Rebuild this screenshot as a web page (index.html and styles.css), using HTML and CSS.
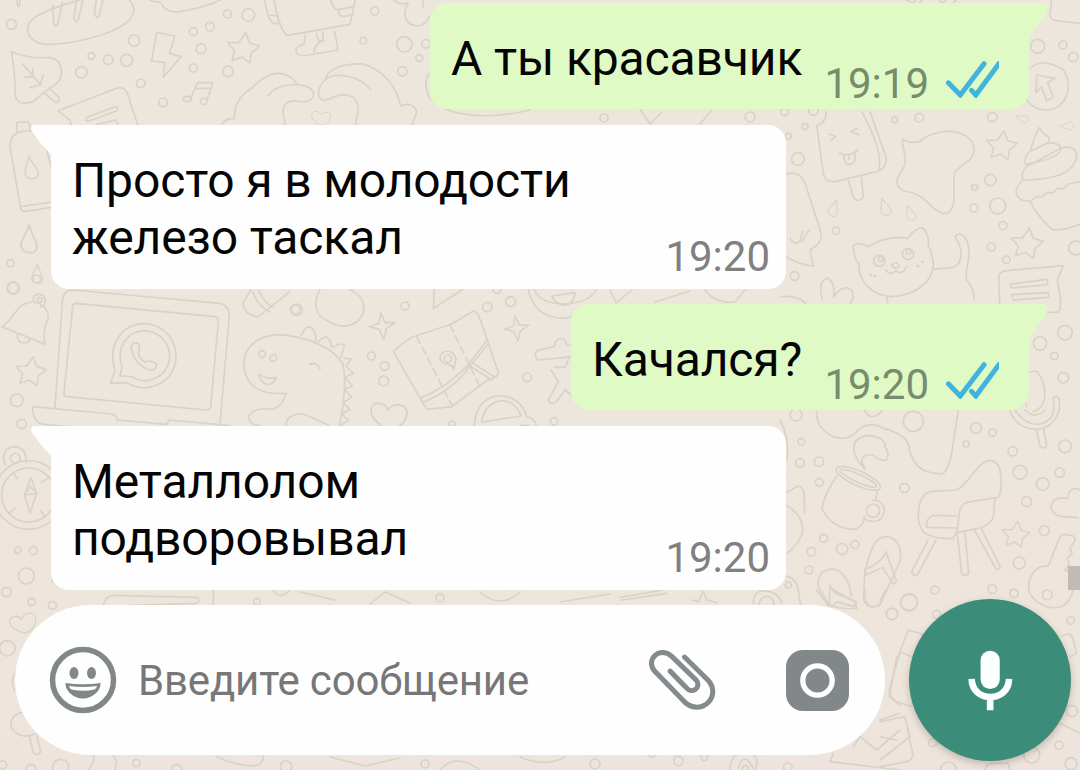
FILE: index.html
```html
<!DOCTYPE html>
<html lang="ru">
<head>
  <meta charset="UTF-8" />
  <meta name="viewport" content="width=device-width, initial-scale=1.0"/>
  <title>Чат</title>
  <link rel="stylesheet" href="styles.css">
</head>
<body>

  <!-- обои чата -->
  <svg class="wallpaper" viewBox="0 0 1080 770" aria-hidden="true">
    <defs>
      <path id="star" d="M4 -46 L16 -15 L46 -6 L21 15 L17 45 L-7 27 L-37 38 L-29 9 L-50 -16 L-16 -17 Z"/>
      <path id="spark" d="M-5 -40 L8 -10 L38 -10 L12 8 L4 40 L-10 10 L-38 2 L-10 -8 Z"/>
      <path id="heart" d="M0 38 C-20 30 -52 5 -48 -18 C-44 -42 -8 -38 -2 -16 C10 -38 52 -34 50 -8 C48 14 30 36 0 38 Z"/>
      <path id="drop" d="M0 -38 C4 -15 24 8 22 25 C18 45 -18 42 -22 20 C-24 4 -6 -15 0 -38 Z"/>
    </defs>

    <g transform="scale(.33333)">
      <path d="M85 75 C95 40 220 0 300 -12 C390 -30 415 20 395 50 C370 95 240 130 150 133 C100 135 75 105 85 75 Z"/>
      <path d="M158 15 L161 70 Q168 88 174 70 L187 8 M230 0 L221 55 Q228 74 236 55 L250 -5 M290 -5 L283 42 Q292 62 299 42 L310 -5"/>
      <path d="M34 155 Q90 178 150 172 C190 180 195 230 165 255 Q125 280 100 305 Q50 320 46 285 C45 240 45 210 34 155 Z M68 192 L122 255 M72 232 L97 230 L99 205 M90 262 L120 255 L130 225 M133 280 L165 306 Q182 308 176 292 L148 264"/>
      <path d="M470 97 L525 108 L508 160 L543 170 L490 232 L494 187 L455 183 Z"/>
      <path d="M215 380 L210 360 L174 332 L350 265 Q372 258 382 280 L415 380 M262 352 L345 320 Q360 322 350 333 L265 364 Q250 362 262 352 M290 374 L345 360 L355 372"/>
      <path d="M572 296 L592 248 L639 248 L620 302 M585 265 L632 265"/>
      <ellipse cx="562" cy="297" rx="12" ry="8"/><circle cx="611" cy="304" r="10"/>
      <path d="M450 0 Q465 8 482 6 Q495 40 540 35 Q620 22 670 -4"/>
      <path d="M793 0 L805 50 Q815 75 834 70 M822 0 C830 45 840 90 862 106 L1050 73 L1066 0 M808 45 L828 48 M993 0 Q1000 35 1020 28 L1062 20 M1018 30 Q1010 48 1030 50 L1058 44"/>
      <path d="M915 106 L913 132 Q880 140 890 160 Q900 170 925 165 L1014 150 L1004 95 M950 100 L955 122 L970 120 L968 96 M972 122 Q945 128 942 155"/>
      <path d="M660 380 Q680 350 704 356 C700 320 720 285 755 265 C790 230 820 210 860 225 Q880 235 890 252 M803 288 Q830 255 870 255 Q930 250 941 280 Q940 312 890 303 Q850 300 849 335 L856 380"/>
      <path d="M975 240 C985 200 1040 190 1090 192 C1150 210 1190 260 1202 318 Q1240 305 1250 335 L1235 380 M1112 270 C1080 225 1000 215 975 240 C945 270 950 310 985 298 C1030 275 1075 280 1075 330 L1065 380"/>
      <path d="M1180 0 Q1200 18 1225 8 C1205 45 1215 75 1255 78 Q1275 75 1288 50 M1270 0 V20 M1290 220 Q1265 240 1290 300"/>
      <path d="M52 0 V14 Q56 24 60 14 V0"/>
      <use href="#star" x="733" y="144"/><use href="#heart" transform="translate(963 354) scale(.58)"/>
      <circle cx="34" cy="73" r="15"/><circle cx="402" cy="122" r="17"/><circle cx="274" cy="168" r="10"/><circle cx="325" cy="179" r="14"/><circle cx="380" cy="181" r="18"/><circle cx="244" cy="217" r="17"/><circle cx="422" cy="250" r="13"/><circle cx="489" cy="307" r="13"/><circle cx="580" cy="204" r="12"/><circle cx="603" cy="146" r="15"/><circle cx="580" cy="95" r="12"/><circle cx="630" cy="80" r="13"/><circle cx="682" cy="42" r="12"/><circle cx="745" cy="45" r="19"/><circle cx="684" cy="214" r="16"/><circle cx="1124" cy="33" r="12"/><circle cx="1090" cy="122" r="10"/><circle cx="1213" cy="133" r="23"/><circle cx="1278" cy="131" r="13"/><circle cx="1258" cy="174" r="10"/><circle cx="1207" cy="214" r="14"/>
    </g>

    <!-- мороженое, кот, пирожное -->
    <g transform="translate(780 0) scale(.33333)">
      <path d="M110 375 Q140 370 138 335 M110 375 L130 520 Q135 548 165 545 L290 515 Q322 505 318 470 L270 335 M245 335 C270 380 310 460 296 512 M205 542 L220 590 Q235 612 250 592 L244 528 M148 402 L168 410 L154 420 M232 385 L212 396 L236 404 M178 460 Q205 472 234 450 M190 465 Q195 500 215 492 Q232 482 222 458 M207 464 V478"/>
      <path d="M368 418 Q390 432 420 425 C460 385 560 380 580 435 C595 490 520 495 522 530 L522 600 C515 650 490 650 455 620 C420 580 390 575 370 573 C335 550 355 530 372 500 C385 480 362 430 368 418 Z"/>
      <path d="M748 206 Q790 170 850 210 C885 260 855 330 800 330 Q760 330 740 300 M770 225 L825 235 L803 248 L820 292 L800 302 L785 260 L768 278 Z"/>
      <path d="M815 0 L810 45 Q812 62 835 63 L900 70 M380 0 L400 8 L410 -2 M420 6 L435 -5 M478 0 L485 8 L500 0 M520 6 L535 -4"/>
      <path d="M752 452 Q765 400 778 383 Q785 400 805 410 Q812 425 800 430 M735 487 Q735 455 760 450 L800 430 Q845 425 842 450 Q830 480 735 492 M728 540 Q720 500 760 490 L845 443 Q890 435 890 470 Q880 540 728 540 M728 540 Q690 580 725 600 L750 604 L770 590 L788 590 L800 578 L818 578 L832 566 L850 566 L866 552 L900 545 M750 604 Q780 660 820 690 Q860 690 900 672"/>
      <path d="M265 740 C235 725 218 730 220 745 Q225 785 236 790 C235 850 280 885 330 890 C400 888 460 850 460 790 Q455 750 445 740 C448 700 430 680 418 684 Q390 700 385 715 Q320 705 265 740 Z M460 808 L520 802 C555 785 545 740 525 710 Q540 690 560 720 C580 770 550 810 560 840 Q585 870 582 900 M318 810 Q330 830 348 812 Q365 828 380 800 M335 795 Q350 780 358 798 Q346 812 335 795"/>
      <circle cx="298" cy="782" r="17"/><circle cx="384" cy="762" r="17"/><circle cx="302" cy="777" r="7"/><circle cx="386" cy="755" r="7"/><circle cx="272" cy="825" r="2"/><circle cx="285" cy="828" r="2"/><circle cx="414" cy="797" r="2"/><circle cx="427" cy="785" r="2"/>
      <path d="M18 522 Q60 510 75 550 L124 700 Q125 735 92 748 Q90 770 102 798 Q60 795 18 770 M30 715 Q45 740 60 722 L68 695 M65 725 L88 690"/>
      <path d="M128 900 Q110 840 145 834 Q165 850 162 890 Q190 850 215 870 Q225 890 210 912 M0 890 Q60 885 80 915 Q150 920 165 930 M320 890 L326 925"/>
      <path d="M660 940 L656 830 Q658 815 680 812 L850 797 L832 840 L842 900 L840 925 Q840 938 825 937 L790 936 M692 852 L800 838 Q808 850 798 855 L695 864 Z M695 884 L805 878 L806 892 L700 900 Z"/>
      <use href="#drop" transform="translate(162 624) rotate(20) scale(.65)"/><use href="#drop" transform="translate(314 620) rotate(-20) scale(.7)"/><use href="#drop" transform="translate(390 638) rotate(-20) scale(.62)"/><use href="#drop" transform="translate(726 355) rotate(-70) scale(.5)"/><use href="#drop" transform="translate(860 378) rotate(-90) scale(.55)"/>
      <use href="#star" transform="translate(668 436) scale(.95)"/><use href="#star" transform="translate(744 730)"/>
      <circle cx="773" cy="139" r="21"/><circle cx="849" cy="135" r="12"/><circle cx="880" cy="171" r="14"/><circle cx="344" cy="359" r="9"/><circle cx="418" cy="353" r="13"/><circle cx="637" cy="351" r="14"/><circle cx="75" cy="380" r="9"/><circle cx="25" cy="409" r="9"/><circle cx="54" cy="477" r="19"/><circle cx="100" cy="332" r="14"/><circle cx="14" cy="336" r="11"/><circle cx="631" cy="540" r="17"/><circle cx="584" cy="562" r="9"/><circle cx="582" cy="624" r="12"/><circle cx="653" cy="618" r="24"/><circle cx="669" cy="677" r="12"/><circle cx="634" cy="741" r="12"/><circle cx="679" cy="779" r="11"/><circle cx="887" cy="744" r="21"/><circle cx="168" cy="692" r="11"/><circle cx="44" cy="828" r="13"/>
    </g>

    <!-- ноутбук и колокольчик -->
    <g transform="translate(0 280) scale(.33333)">
      <path d="M165 383 L187 65 Q188 30 220 30 L660 70 Q692 78 687 120 L660 432 M218 80 Q218 70 228 70 L645 110 Q656 112 655 125 L632 380 Q630 391 618 390 L200 350 Q190 348 192 338 Z"/>
      <path d="M97 380 L335 402 Q350 405 352 420 L500 433 L508 420 L690 437 M97 380 Q98 425 130 433 L220 441"/>
      <path d="M332 310 L345 270 C320 190 370 131 434 131 C500 135 535 190 527 245 C515 310 440 345 380 308 Z M360 288 L366 262 C345 200 385 152 434 152 C485 155 515 200 508 240 C500 290 440 320 395 290 Z"/>
      <path d="M393 200 Q398 185 415 190 Q422 205 414 218 Q418 235 435 246 Q455 238 470 252 Q470 272 450 270 Q400 255 393 200 Z"/>
      <path d="M6 140 C50 110 45 70 100 66 Q145 75 145 115 Q125 155 136 193 Z M102 66 Q95 42 118 43 Q138 45 136 65 Q133 80 122 80 M52 162 Q52 190 70 188 Q88 190 90 175"/>
      <circle cx="119" cy="60" r="7"/><use href="#star" transform="translate(95 274) scale(.95)"/>
      <circle cx="39" cy="24" r="17"/><circle cx="110" cy="-3" r="12"/><circle cx="50" cy="361" r="19"/><circle cx="65" cy="432" r="14"/>
      <circle cx="886" cy="88" r="14"/>
    </g>

    <!-- динозавр и карта -->
    <g transform="translate(240 280) scale(.33333)">
      <path d="M298 438 C310 380 320 300 308 250 C270 190 170 165 110 164 C40 170 10 210 11 260 C20 320 60 345 138 340 Q130 375 100 388 Q40 380 26 410 Q30 438 60 436 M138 436 Q140 400 190 402 L265 435 M183 165 L200 142 Q225 135 228 182 M235 186 Q265 150 275 200 M278 202 Q305 185 313 197 L303 232 M312 235 L334 237 L318 258 L340 280 L316 292 L337 318 L314 328 L334 352 L310 368 L329 388 L305 402 L326 422 L300 436 M208 252 Q232 245 240 268 M215 254 Q225 248 232 255 M55 283 Q85 300 110 292 Q95 322 72 310 Q60 300 55 283 Z"/>
      <circle cx="66" cy="222" r="10"/><circle cx="100" cy="234" r="10"/>
      <path d="M8 70 L38 20 M8 70 Q15 108 55 110 L150 35 M38 35 Q55 80 88 95 M55 30 Q70 65 98 82 M240 28 C215 75 230 110 262 122 C310 155 370 135 372 80 Q365 45 340 35 L328 28"/>
      <path d="M583 28 L580 86 L668 28"/>
      <path d="M460 215 Q500 175 535 165 L635 132 L700 93 Q712 95 718 112 L776 280 Q770 295 740 302 L635 380 L560 388 Z M543 355 Q620 320 680 260 L740 182 M548 368 Q640 330 690 258 L745 192 M685 255 L755 300 M697 248 L765 292"/>
      <path d="M530 170 L635 375 M630 135 L720 320" stroke-dasharray="22 14"/>
      <path d="M640 268 C640 245 600 260 600 232 C602 205 648 208 648 240 Z"/><circle cx="624" cy="236" r="11"/>
      <path d="M705 420 C720 320 840 330 860 410 Q885 415 888 436 M725 426 C735 350 820 340 843 408 Z M703 436 L706 412 M842 436 H865"/>
      <path d="M865 28 C880 110 960 130 1005 105 M935 48 L1005 38 Q1000 78 970 75 Q945 70 935 48 Z"/>
      <path d="M1000 230 L895 240 Q880 230 890 212 L942 200 Q950 165 975 180 L980 195 H1005 M945 262 L975 262 L990 228 M933 270 L955 305 L925 360 Q935 378 950 365 L975 330 L1000 350"/>
      <use href="#spark" x="427" y="138"/><use href="#spark" transform="translate(830 145) scale(.95)"/><use href="#heart" transform="translate(446 408) scale(1.1)"/>
      <circle cx="170" cy="89" r="17"/><circle cx="495" cy="78" r="12"/><circle cx="394" cy="228" r="12"/><circle cx="434" cy="258" r="13"/><circle cx="431" cy="303" r="15"/><circle cx="742" cy="81" r="14"/><circle cx="812" cy="65" r="15"/><circle cx="771" cy="28" r="12"/><circle cx="861" cy="292" r="13"/><circle cx="942" cy="424" r="11"/><circle cx="636" cy="432" r="9"/>
    </g>

    <!-- кружка, кресло, ключ -->
    <g transform="translate(780 410) scale(.33333)">
      <path d="M110 5 C105 60 170 105 220 75 Q260 25 310 55 Q390 75 388 120 C405 180 440 190 485 192 Q505 185 515 130 L535 0"/>
      <path d="M252 175 C210 130 210 85 260 77 C290 75 320 90 315 112 Q330 125 320 150 Q300 155 280 135 Q245 130 245 158 L256 175"/>
      <ellipse cx="235" cy="205" rx="72" ry="22" transform="rotate(24 235 205)"/><ellipse cx="235" cy="205" rx="60" ry="12" transform="rotate(24 235 205)"/>
      <path d="M172 195 Q130 260 126 295 C150 345 190 358 225 358 Q255 345 250 325 M292 240 L288 268 M277 270 Q315 272 313 305 Q305 338 275 334 Q250 330 253 318"/><circle cx="279" cy="302" r="20"/>
      <path d="M418 285 Q425 250 455 244 L530 240 C570 220 590 155 630 151 Q660 155 661 190 Q668 240 655 262 L560 277 C530 290 540 330 530 365 L520 385 Q470 390 435 370 C412 345 412 320 418 285 Z M645 265 L640 320 Q630 350 580 358 L530 368 M530 318 L460 316 Q435 328 440 352 L530 354"/>
      <path d="M445 388 L395 485 Q402 502 412 495 L468 390 M532 372 L545 490 Q555 502 566 490 L555 368 M584 362 L648 477 Q660 482 660 468 L604 356"/>
      <path d="M255 480 C270 440 275 385 315 380 C360 380 370 430 355 465 L300 585 Q265 600 250 570 Z M255 478 Q310 455 318 425 L350 515 L340 522 L308 472 L258 495 Z"/>
      <path d="M147 585 L115 530 C110 485 140 475 165 478 C200 490 210 530 215 560 M150 525 L165 550 L230 575 L222 590 L170 575 L155 590 L148 580 Z"/>
      <path d="M18 285 C60 310 75 345 65 375 Q50 410 18 432 M18 248 L50 230 Q70 225 73 260 L73 310 M0 500 Q45 490 55 540 L62 590"/><circle cx="25" cy="525" r="9"/>
      <path d="M0 30 Q28 80 22 150"/>
      <path d="M805 468 L838 385 Q845 368 865 375 Q885 375 886 390 L870 415 L876 430 L862 445 L868 462 L855 480 Q890 500 880 540 C865 590 840 600 800 590 C750 570 740 540 748 510 Q765 465 805 468 Z"/><circle cx="802" cy="555" r="15"/>
      <path d="M690 0 C700 40 740 60 770 58 Q820 55 838 0 M705 0 Q735 48 780 42 Q815 35 822 0 M735 0 Q765 30 795 0 M769 60 L780 108 Q790 120 800 108 L790 52"/>
      <path d="M740 -10 C720 -70 730 -125 770 -115 Q795 -90 795 -40 Q790 -5 760 5 M822 0 L820 -35 Q830 -50 838 -30 V0"/>
      <path d="M900 240 Q870 225 862 265 Q820 258 812 290 Q820 325 865 320 L895 323"/>
      <use href="#star" transform="translate(710 373) scale(.85)"/>
      <circle cx="48" cy="15" r="18"/><circle cx="400" cy="34" r="30"/><path d="M252 0 Q275 40 308 0"/>
      <circle cx="64" cy="95" r="10"/><circle cx="60" cy="159" r="13"/><circle cx="117" cy="155" r="14"/><circle cx="118" cy="217" r="12"/><circle cx="373" cy="234" r="14"/><circle cx="131" cy="385" r="12"/><circle cx="94" cy="425" r="13"/><circle cx="186" cy="417" r="17"/><circle cx="225" cy="404" r="12"/><circle cx="86" cy="480" r="12"/><circle cx="387" cy="576" r="25"/><circle cx="465" cy="540" r="12"/><circle cx="588" cy="54" r="16"/><circle cx="637" cy="68" r="11"/><circle cx="558" cy="102" r="9"/><circle cx="698" cy="124" r="14"/><circle cx="855" cy="109" r="19"/><circle cx="720" cy="187" r="21"/><circle cx="839" cy="188" r="14"/><circle cx="788" cy="222" r="19"/><circle cx="740" cy="275" r="15"/><circle cx="793" cy="362" r="15"/><circle cx="718" cy="459" r="18"/><circle cx="637" cy="537" r="13"/><circle cx="702" cy="550" r="13"/><circle cx="855" cy="-232" r="22"/><circle cx="780" cy="-200" r="20"/><circle cx="823" cy="-162" r="11"/><circle cx="850" cy="-97" r="16"/>
    </g>

    <!-- бутылка, компас -->
    <g transform="translate(0 110) scale(.33333)">
      <path d="M52 68 L50 42 Q52 35 62 36 L85 36 Q92 50 90 62 M52 68 Q90 55 100 68 C130 80 140 110 155 180 M52 68 Q30 80 30 110 L62 295 Q66 306 78 304 L155 292 M62 290 L155 276"/>
      <use href="#drop" transform="translate(92 172) rotate(-10) scale(.9)"/><use href="#drop" transform="translate(87 386) scale(1.1)"/><use href="#drop" transform="translate(112 491) scale(.75)"/>
      <circle cx="32" cy="460" r="11"/><circle cx="40" cy="534" r="18"/>
    </g>
    <g transform="translate(0 420) scale(.33333)">
      <circle cx="86" cy="225" r="103"/><circle cx="86" cy="225" r="81"/><circle cx="46" cy="115" r="15"/>
      <path d="M17 135 C0 105 20 80 46 80 Q82 85 78 128 M93 172 L110 220 L90 278 L73 225 Z M73 225 L110 220 M80 215 L92 200 L102 212 M40 160 L52 175 M125 188 L148 170 M28 280 L46 264 M122 272 L132 285"/>
      <circle cx="53" cy="391" r="10"/><circle cx="100" cy="392" r="12"/><circle cx="79" cy="468" r="24"/><circle cx="20" cy="516" r="14"/><circle cx="95" cy="546" r="11"/><circle cx="157" cy="556" r="12"/><circle cx="771" cy="545" r="10"/>
      <path d="M310 553 Q315 530 340 526 L590 532 Q605 545 585 550 L390 556 M640 510 V556 M155 485 L165 470 M820 512 Q840 540 868 512"/>
    </g>

    <!-- нижний ряд -->
    <g transform="translate(0 590) scale(.33333)">
      <use href="#heart" transform="translate(70 100) rotate(-18) scale(.8)"/>
      <circle cx="22" cy="175" r="23"/><circle cx="93" cy="537" r="14"/><circle cx="182" cy="532" r="24"/><circle cx="8" cy="525" r="12"/><circle cx="409" cy="519" r="11"/><circle cx="530" cy="540" r="16"/><circle cx="858" cy="530" r="17"/>
      <path d="M105 432 Q60 450 35 415 C25 380 60 360 85 370 M88 438 L100 488 Q112 500 122 486 L110 435 M44 250 Q30 275 44 300 M265 540 Q285 520 280 495 M345 540 L350 515 L340 495 M650 500 Q700 525 760 528 Q790 525 790 498"/>
    </g>
    <g transform="translate(620 590) scale(.33333)">
      <path d="M0 22 L130 0 M5 30 L140 10 M215 30 L235 35 L250 5 L260 30 L290 38 M400 40 Q400 5 430 2 Q475 5 485 40 M415 45 Q425 15 445 20 Q460 22 462 45"/>
      <path d="M590 0 L625 45 Q670 60 710 55 L705 35 L640 0 M735 0 Q730 40 755 52 Q790 50 795 0 M830 200 L808 320 L840 345 M700 470 L720 440 L770 480 L840 420 M640 490 L630 515 L840 540 M780 390 L840 370"/>
      <path d="M330 540 Q330 505 350 495 M405 540 Q420 510 400 495 M355 535 Q370 480 400 535"/><circle cx="376" cy="535" r="9"/>
      <circle cx="816" cy="72" r="17"/><circle cx="175" cy="513" r="14"/><circle cx="253" cy="502" r="10"/><circle cx="503" cy="532" r="13"/><circle cx="96" cy="490" r="12"/>
    </g>
    <g transform="translate(880 590) scale(.33333)">
      <path d="M135 135 L85 120 L60 185 L95 200 M60 185 L28 300 Q30 325 50 335 L95 350 M0 395 L75 380 L98 490 Q100 510 80 515 L0 530 M75 380 L90 440 L40 480 L0 510 M0 440 L50 450 M545 140 Q570 120 580 150 L590 190 L570 200 M540 400 L600 430 M0 30 L18 0"/>
      <circle cx="87" cy="38" r="25"/><circle cx="36" cy="72" r="17"/><circle cx="170" cy="73" r="12"/><circle cx="572" cy="92" r="11"/><circle cx="402" cy="10" r="12"/><circle cx="575" cy="363" r="17"/><circle cx="537" cy="466" r="12"/><circle cx="573" cy="521" r="18"/><circle cx="455" cy="495" r="24"/><circle cx="158" cy="458" r="12"/><circle cx="206" cy="540" r="24"/>
      <path d="M315 540 Q320 515 350 520 L385 520 L390 540"/>
    </g>
    <!-- полосы между сообщениями -->
    <path d="M445 109 Q480 122 530 110 M640 109 L650 124 L662 112 M700 124 L712 110 M534 289 Q540 304 565 304 Q590 302 596 290 M610 290 L616 303 L632 290 M655 302 L690 291 M705 290 Q715 304 735 302 L745 290 M330 757 L365 766 L400 758 M440 770 Q455 752 480 770 M520 757 Q545 768 565 757 M300 592 L335 600 M370 604 L385 592 L410 603 M480 592 Q500 610 520 592 M560 602 L610 594"/>
    <circle cx="604" cy="118" r="4"/><circle cx="750" cy="117" r="5"/><circle cx="425" cy="764" r="4"/><circle cx="595" cy="764" r="5"/><circle cx="440" cy="598" r="4"/>
  </svg>

  <main class="chat">
    <section class="messages">
      <article class="message message-out">
        <p class="text">А ты красавчик</p>
        <span class="time">19:19</span>
        <svg class="checks" viewBox="498 182 160 112"><path d="M505 248 L541 285 L613 190 M575 271 L588 285 L664 182"/></svg>
        <svg class="tail" viewBox="0 0 20 42"><path d="M0 0 H19 Q20 7 17 12 L5 29 Q1 34 0 42 Z"/></svg>
      </article>

      <article class="message message-in">
        <p class="text">Просто я в молодости<br>железо таскал</p>
        <span class="time">19:20</span>
        <svg class="tail" viewBox="0 0 21 30"><path d="M21 0 H4 Q-1 0 .5 6 L11 20 Q15 25 21 30 Z"/></svg>
      </article>

      <article class="message message-out message-short">
        <p class="text">Качался?</p>
        <span class="time">19:20</span>
        <svg class="checks" viewBox="498 182 160 112"><path d="M505 248 L541 285 L613 190 M575 271 L588 285 L664 182"/></svg>
        <svg class="tail" viewBox="0 0 20 42"><path d="M0 0 H16 Q22 2 17 12 L5 29 Q1 34 0 42 Z"/></svg>
      </article>

      <article class="message message-in">
        <p class="text">Металлолом<br>подворовывал</p>
        <span class="time">19:20</span>
        <svg class="tail" viewBox="0 0 21 30"><path d="M21 0 H4 Q-1 0 .5 6 L11 20 Q15 25 21 30 Z"/></svg>
      </article>
    </section>

    <footer class="composer">
      <div class="field">
        <svg class="emoji" viewBox="0 0 68 68">
          <circle class="line" cx="34" cy="34" r="30.5"/>
          <ellipse cx="25" cy="27" rx="4.5" ry="6"/><ellipse cx="42.5" cy="27" rx="4.5" ry="6"/>
          <path d="M16.500 37 Q34 39.500 51.500 37 C52 45 43 52.500 34 52.500 C25 52.500 16 45 16.500 37 Z"/>
          <path class="teeth" d="M20 40 Q34 42 48 40 Q47.500 42.500 45.500 43.500 Q34 46 22.500 43.500 Q20.500 42.500 20 40 Z"/>
        </svg>
        <span class="placeholder">Введите сообщение</span>
        <svg class="clip" viewBox="86 180 200 182"><path d="M149 243 L198 293 C212 312 244 294 227 270 L154 199 C117 166 75 210 102 242 L193 336 C245 380 303 316 263 271 L192 201"/></svg>
        <svg class="camera" viewBox="0 0 63 61"><rect width="63" height="61" rx="17"/><circle cx="31.5" cy="30.5" r="14.7"/></svg>
      </div>
      <button class="mic" aria-label="Голосовое сообщение">
        <svg viewBox="264 176 136 182"><rect x="302" y="177" width="58" height="116" rx="29"/><path d="M275 262 C276 335 387 335 388 262 M331 318 V357"/></svg>
      </button>
    </footer>
  </main>

  <div class="scroll-thumb"></div>

</body>
</html>
```

FILE: styles.css
```css
* {
  box-sizing: border-box;
  font-family: Roboto, "Liberation Sans", sans-serif;
}

body {
  margin: 0;
  height: 770px;
  position: relative;
  overflow: hidden;
  background: linear-gradient(#ede6dc, #ede6dc 60%, #eee4dd);
}

.wallpaper {
  position: absolute;
  left: 0;
  top: 0;
  width: 1080px;
  height: 770px;
  fill: none;
  stroke: #d9d2c7;
  stroke-width: 5;
  stroke-linejoin: round;
  stroke-linecap: round;
}

.wallpaper > path,
.wallpaper > circle {
  stroke-width: 1.6;
}

.chat {
  position: relative;
  height: 770px;
  padding-top: 3px;
}

.messages {
  display: flex;
  flex-direction: column;
  padding: 0 51px;
}

.message {
  position: relative;
  display: flex;
  align-items: flex-end;
  justify-content: space-between;
  border-radius: 18px;
}

.message-in {
  width: 735px;
  height: 164px;
  margin-bottom: 15px;
  padding: 27px 16px 23px 21px;
  background: #fefefe;
  fill: #fefefe;
  border-top-left-radius: 0;
}

.message-out {
  align-self: flex-end;
  width: 599px;
  height: 106px;
  margin-bottom: 16px;
  padding: 0 30px 22px 21px;
  background: #dffac5;
  fill: #dffac5;
  border-top-right-radius: 0;
}

.message-short {
  width: 458px;
}

.text {
  margin: 0;
  font-size: 48px;
  line-height: 57px;
  letter-spacing: -0.12px;
  color: #050505;
  white-space: nowrap;
}

.time {
  font-size: 42px;
  line-height: 42px;
  color: #808080;
  margin-bottom: -12px;
}

.message-out .time {
  color: #788b6d;
  margin: 0 17px -18px auto;
}

.checks {
  width: 53px;
  height: 37px;
  margin-bottom: -11px;
  fill: none;
  stroke: #40b4dd;
  stroke-width: 15;
  stroke-linecap: round;
}

.tail {
  position: absolute;
  top: 0;
}

.message-in .tail {
  left: -20px;
  width: 21px;
  height: 30px;
}

.message-out .tail {
  right: -19px;
  width: 20px;
  height: 42px;
}

.composer {
  display: flex;
  align-items: center;
  gap: 24px;
  height: 150px;
  padding-left: 15px;
}

.field {
  display: flex;
  align-items: center;
  width: 870px;
  height: 150px;
  padding: 0 36px 0 34px;
  border-radius: 75px;
  background: #fefefe;
  fill: #82878a;
}

.emoji {
  width: 68px;
  height: 68px;
}

.emoji .line {
  fill: none;
  stroke: #82878a;
  stroke-width: 5.5;
}

.emoji .teeth {
  fill: #fefefe;
}

.placeholder {
  margin-left: 21px;
  padding-top: 2px;
  font-size: 42px;
  line-height: 50px;
  letter-spacing: -0.18px;
  color: #777;
  white-space: nowrap;
}

.clip {
  width: 67px;
  height: 61px;
  margin-left: auto;
  fill: none;
  stroke: #858a8c;
  stroke-width: 15;
  stroke-linecap: round;
}

.camera {
  width: 63px;
  height: 61px;
  margin-left: 70px;
}

.camera circle {
  fill: none;
  stroke: #fefefe;
  stroke-width: 5.3;
}

.mic {
  display: flex;
  align-items: center;
  justify-content: center;
  width: 162px;
  height: 162px;
  padding: 0;
  border: none;
  border-radius: 50%;
  background: #3c8c7a;
  box-shadow: 0 3px 7px rgba(90, 80, 70, 0.3);
}

.mic svg {
  width: 45px;
  height: 61px;
  fill: #fbfffe;
}

.mic path {
  fill: none;
  stroke: #fbfffe;
  stroke-width: 20;
}

.scroll-thumb {
  position: absolute;
  right: 0;
  top: 566px;
  width: 12px;
  height: 24px;
  background: #c1bab5;
}
```
